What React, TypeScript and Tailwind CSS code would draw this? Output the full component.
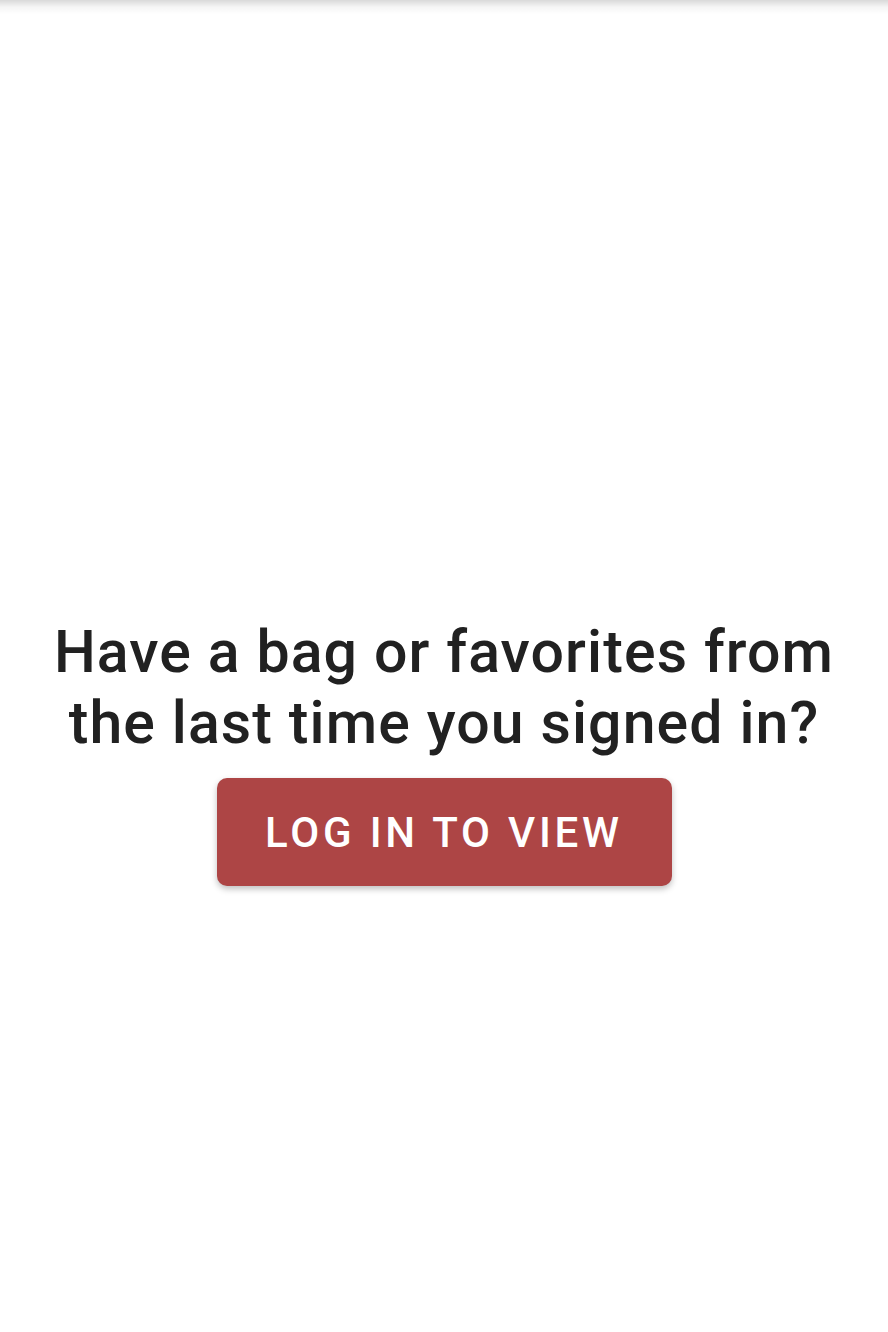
import React from "react";

export default function App() {
  return (
    <div className="min-h-[1332px] w-full bg-white flex flex-col" style={{ fontFamily: "Roboto, 'Noto Sans', sans-serif" }}>
      <div className="h-[14px] w-full bg-gradient-to-b from-black/15 via-black/[0.04] to-transparent" />
      <div className="flex flex-col items-center pt-[602px]">
        <h1 className="text-center text-[59px] leading-[71px] font-medium text-[#212121] tracking-[1.1px]">
          Have a bag or favorites from
          <br />
          the last time you signed in?
        </h1>
        <button className="mt-[20px] w-[455px] h-[108px] rounded-[10px] bg-[#ad4545] text-white text-[42px] font-medium tracking-[3.8px] shadow-[0_3px_6px_rgba(0,0,0,0.25)] flex items-center justify-center">
          LOG IN TO VIEW
        </button>
      </div>
    </div>
  );
}
